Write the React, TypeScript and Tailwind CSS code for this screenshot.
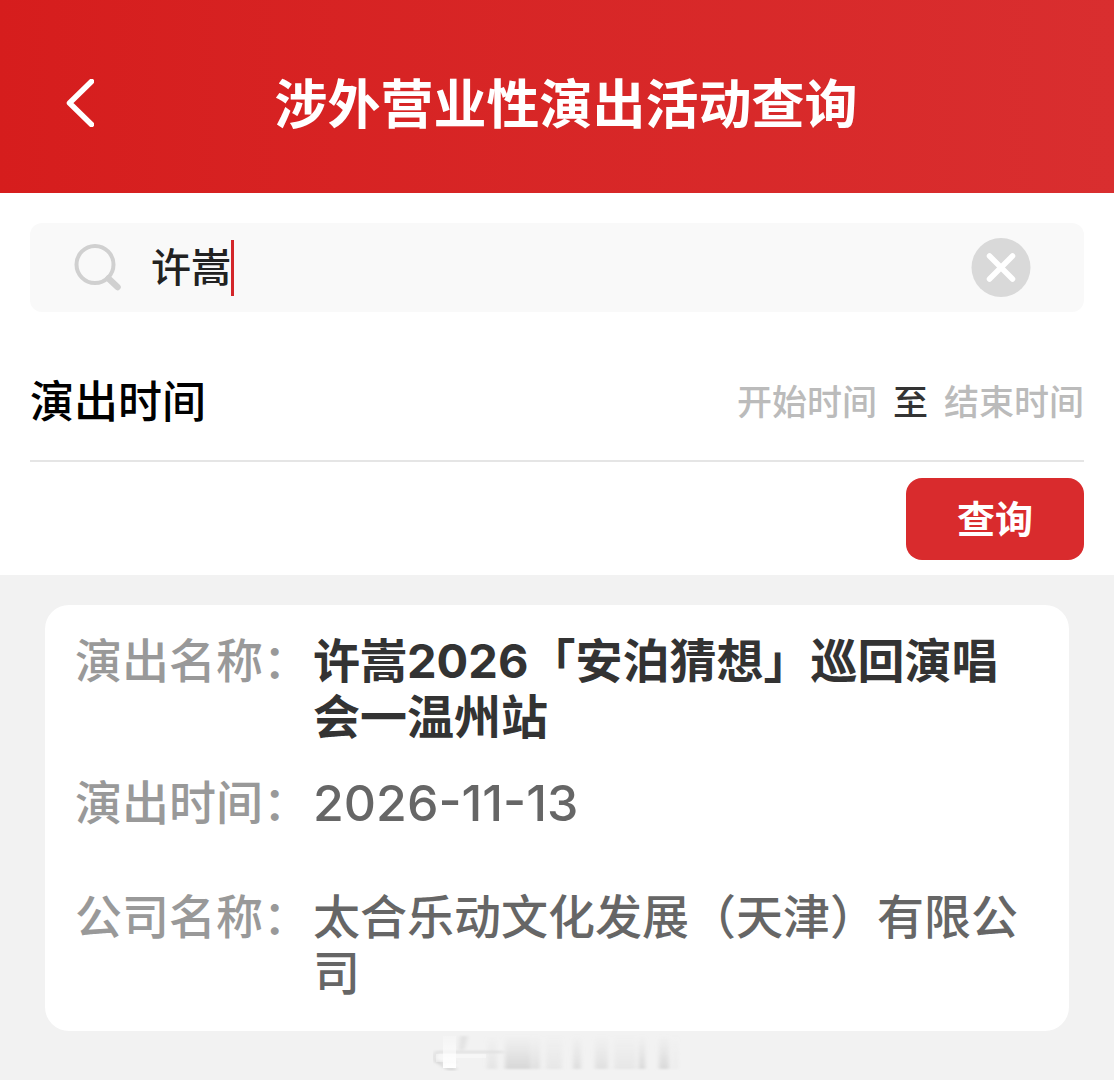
import { useState } from "react";

interface Performance {
  name: string;
  date: string;
  company: string;
}

const performance: Performance = {
  name: "许嵩2026「安泊猜想」巡回演唱会一温州站",
  date: "2026-11-13",
  company: "太合乐动文化发展（天津）有限公司",
};

function BackIcon() {
  return (
    <svg viewBox="0 0 28 48" className="h-12 w-7" fill="none" aria-hidden="true">
      <path
        d="M25.5 2.5 3.5 24l22 21.5"
        stroke="#fff"
        strokeWidth="5.5"
        strokeLinecap="round"
        strokeLinejoin="round"
      />
    </svg>
  );
}

function SearchIcon() {
  return (
    <svg
      viewBox="0 0 48 48"
      className="size-12 shrink-0"
      fill="none"
      stroke="#d0d0d0"
      aria-hidden="true"
    >
      <circle cx="21" cy="20.5" r="18.5" strokeWidth="4" />
      <path d="m34.5 34.5 9 8.5" strokeWidth="6.5" strokeLinecap="round" />
    </svg>
  );
}

function ClearIcon() {
  return (
    <svg viewBox="0 0 60 60" className="size-[60px]" aria-hidden="true">
      <circle cx="30" cy="29.5" r="29.5" fill="#d9d9d9" />
      <path
        d="m18.5 18 23 23m0-23-23 23"
        stroke="#fff"
        strokeWidth="5.5"
        strokeLinecap="round"
      />
    </svg>
  );
}

/* Faded mark under the card */
function FooterMark() {
  const bars = [
    [54, 10, 0.3],
    [72, 26, 0.6],
    [99, 8, 0.4],
    [113, 16, 0.25],
    [140, 8, 0.45],
    [162, 13, 0.4],
    [181, 22, 0.25],
    [206, 6, 0.6],
    [226, 10, 0.55],
    [240, 5, 0.15],
  ];
  return (
    <svg viewBox="0 0 248 38" className="h-[38px] w-[248px]" aria-hidden="true">
      <defs>
        <linearGradient id="fade" x1="0" y1="0" x2="0" y2="1">
          <stop offset="0" stopColor="#ccc" stopOpacity="0" />
          <stop offset="1" stopColor="#c4c4c4" />
        </linearGradient>
        <linearGradient id="glow" x1="0" y1="0" x2="0" y2="1">
          <stop offset="0" stopColor="#fff" stopOpacity="0.2" />
          <stop offset="1" stopColor="#fff" />
        </linearGradient>
        <filter id="soft">
          <feGaussianBlur stdDeviation="2 0.8" />
        </filter>
      </defs>
      <g filter="url(#soft)">
        {bars.map(([x, width, opacity]) => (
          <rect key={x} x={x} y="2" width={width} height="34" fill="url(#fade)" opacity={opacity} />
        ))}
        <path d="M27 3h8l-4 14h-5z" fill="#e2e2e2" />
        <path d="M2 19h68M2 29h20" stroke="#dedede" strokeWidth="2" />
        <path d="M3 20q-4 6 2 9l10 7h8" fill="none" stroke="#ccc" strokeWidth="2" />
      </g>
      <rect x="10" y="3" width="13" height="32" fill="url(#glow)" />
      <path d="M3 21h50v4H23v4H3z" fill="#fff" opacity="0.4" />
    </svg>
  );
}

function ResultRow({
  label,
  className,
  children,
}: {
  label: string;
  className: string;
  children: React.ReactNode;
}) {
  return (
    <div className="flex min-h-[84px]">
      <dt className="w-[238px] shrink-0 text-[#999]">{label}</dt>
      <dd className={className}>{children}</dd>
    </div>
  );
}

export default function App() {
  const [keyword, setKeyword] = useState("许嵩");

  return (
    <div className="min-h-screen bg-[#f2f2f2] font-['Inter','Noto_Sans_CJK_SC',sans-serif] font-medium">
      {/* Header */}
      <header className="flex h-[193px] items-center bg-linear-to-r from-[#d61d1d] to-[#d92e2f] pt-4 pr-[76px] pl-[66px]">
        <button type="button" aria-label="返回" className="pb-1">
          <BackIcon />
        </button>
        <h1 className="flex-1 text-center text-[53px] leading-[60px] font-bold text-white">
          涉外营业性演出活动查询
        </h1>
      </header>

      {/* Search form */}
      <form
        className="bg-white px-[30px] pt-[30px] pb-[15px]"
        onSubmit={(e) => e.preventDefault()}
      >
        <div className="flex h-[89px] items-center rounded-xl bg-[#f9f9f9] pr-[53px] pl-11">
          <SearchIcon />
          <input
            type="text"
            aria-label="演出名称"
            value={keyword}
            onChange={(e) => setKeyword(e.target.value)}
            className="ml-[29px] field-sizing-content text-[40px] leading-[56px] text-[#222] outline-none"
          />
          <span className="h-[56px] w-[3px] bg-[#d3262a]" />
          <button
            type="button"
            aria-label="清除"
            className="ml-auto"
            onClick={() => setKeyword("")}
          >
            <ClearIcon />
          </button>
        </div>

        <div className="flex h-[150px] items-center justify-between border-b-2 border-[#e5e5e5] pt-8">
          <span className="text-[44px] text-black">演出时间</span>
          <div className="flex items-center gap-4 text-[35px] text-[#bbb]">
            <button type="button">开始时间</button>
            <span className="text-[#333]">至</span>
            <button type="button">结束时间</button>
          </div>
        </div>

        <div className="flex justify-end pt-4">
          <button
            type="submit"
            className="h-[82px] w-[178px] rounded-2xl bg-[#d92b2d] text-[38px] font-bold text-white"
          >
            查询
          </button>
        </div>
      </form>

      {/* Results */}
      <main className="px-[45px] pt-[30px]">
        <dl className="flex flex-col gap-[30px] rounded-3xl bg-white px-[30px] pt-7 text-[47px] leading-[56px]">
          <ResultRow label="演出名称：" className="font-bold text-[#333]">
            {performance.name}
          </ResultRow>
          <ResultRow label="演出时间：" className="text-[50px] text-[#666]">
            {performance.date}
          </ResultRow>
          <ResultRow label="公司名称：" className="pb-[30px] text-[#666]">
            {performance.company}
          </ResultRow>
        </dl>
      </main>
      <footer className="flex justify-center pt-[2px]">
        <FooterMark />
      </footer>
    </div>
  );
}
